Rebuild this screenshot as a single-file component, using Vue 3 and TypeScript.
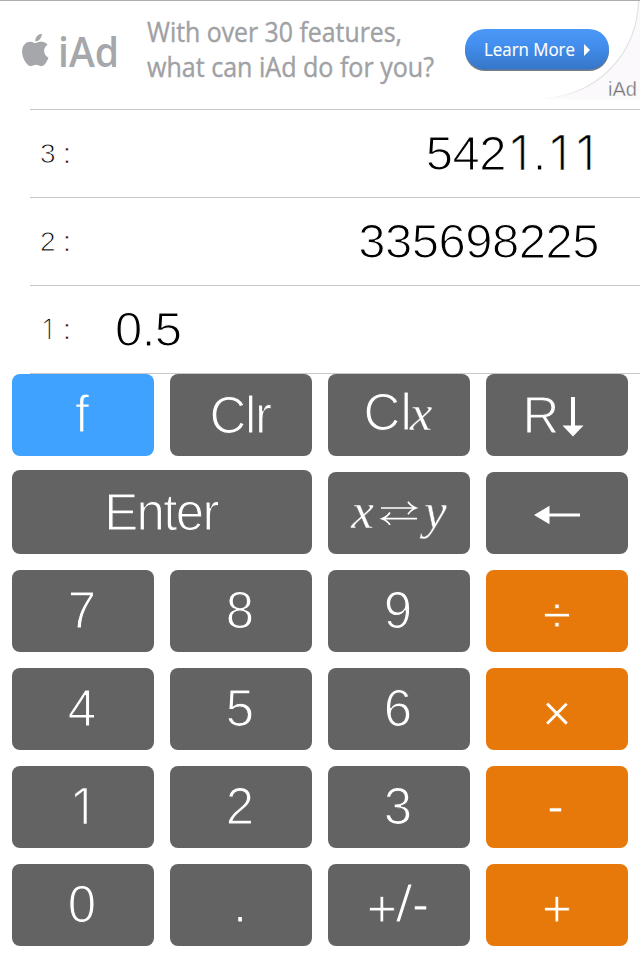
<script setup lang="ts">
interface StackRow {
  label: string
  value: string
  entry: boolean
}

interface Key {
  id: string
  label: string
  tone: 'gray' | 'blue' | 'orange'
}

interface Piece {
  text: string
  kind: string
}

const rows: StackRow[] = [
  { label: '3', value: '5421.11', entry: false },
  { label: '2', value: '335698225', entry: false },
  { label: '1', value: '0.5', entry: true },
]

const keys: Key[] = [
  { id: 'func', label: 'f', tone: 'blue' },
  { id: 'clear', label: 'Clr', tone: 'gray' },
  { id: 'clearx', label: 'Cl', tone: 'gray' },
  { id: 'roll', label: 'R', tone: 'gray' },
  { id: 'enter', label: 'Enter', tone: 'gray' },
  { id: 'swap', label: '', tone: 'gray' },
  { id: 'back', label: '', tone: 'gray' },
  { id: 'd7', label: '7', tone: 'gray' },
  { id: 'd8', label: '8', tone: 'gray' },
  { id: 'd9', label: '9', tone: 'gray' },
  { id: 'divide', label: '÷', tone: 'orange' },
  { id: 'd4', label: '4', tone: 'gray' },
  { id: 'd5', label: '5', tone: 'gray' },
  { id: 'd6', label: '6', tone: 'gray' },
  { id: 'times', label: '×', tone: 'orange' },
  { id: 'd1', label: '1', tone: 'gray' },
  { id: 'd2', label: '2', tone: 'gray' },
  { id: 'd3', label: '3', tone: 'gray' },
  { id: 'minus', label: '-', tone: 'orange' },
  { id: 'd0', label: '0', tone: 'gray' },
  { id: 'dot', label: '.', tone: 'gray' },
  { id: 'sign', label: '+/-', tone: 'gray' },
  { id: 'plus', label: '+', tone: 'orange' },
]

const kinds: Record<string, string> = { '1': 'one', '+': 'add', '-': 'dash' }

// The digit one and the signs are set apart so they can take their own face and height.
function pieces(text: string): Piece[] {
  return text
    .split(/([1+-])/)
    .filter((part) => part !== '')
    .map((part) => ({ text: part, kind: kinds[part] ?? 'plain' }))
}
</script>

<template>
  <main class="calculator">
    <svg class="banner" viewBox="0 0 640 109" width="640" height="109">
      <defs>
        <linearGradient id="pill" x1="0" y1="0" x2="0" y2="1">
          <stop offset="0" stop-color="#4b98f6" />
          <stop offset="0.35" stop-color="#4490f0" />
          <stop offset="1" stop-color="#3576c8" />
        </linearGradient>
        <linearGradient id="fade" gradientUnits="userSpaceOnUse" x1="540" y1="0" x2="590" y2="0">
          <stop offset="0" stop-color="#fff" />
          <stop offset="1" stop-color="#e2e2e5" />
        </linearGradient>
      </defs>
      <path class="corner" d="M540 99.500A98.500 98.500 0 0 0 638.500 1H640V99.500Z" />
      <path class="curl" d="M540 98.500A98.500 98.500 0 0 0 638.500 1" />
      <rect class="edge" width="640" height="1" />
      <path
        class="logo"
        transform="translate(19.100 33.800) scale(1.350)"
        d="M12.152 6.896c-.948 0-2.415-1.078-3.960-1.040-2.040.027-3.910 1.183-4.961 3.014-2.117 3.675-.546 9.103 1.519 12.090 1.013 1.454 2.208 3.090 3.792 3.039 1.520-.065 2.090-.987 3.935-.987 1.831 0 2.350.987 3.960.948 1.637-.026 2.676-1.480 3.676-2.948 1.156-1.688 1.636-3.325 1.662-3.415-.039-.013-3.182-1.221-3.220-4.857-.026-3.040 2.480-4.494 2.597-4.559-1.429-2.090-3.623-2.324-4.390-2.376-2-.156-3.675 1.090-4.610 1.090zM15.530 3.830c.843-1.012 1.400-2.427 1.245-3.830-1.207.052-2.662.805-3.532 1.818-.780.896-1.454 2.338-1.273 3.714 1.338.104 2.715-.688 3.559-1.701"
      />
      <text class="brand" x="58" y="66.500" textLength="61" lengthAdjust="spacingAndGlyphs">iAd</text>
      <text class="pitch" x="147" y="42" textLength="255" lengthAdjust="spacingAndGlyphs">With over 30 features,</text>
      <text class="pitch" x="147" y="77" textLength="287" lengthAdjust="spacingAndGlyphs">what can iAd do for you?</text>
      <rect class="pill-shadow" x="465" y="31" width="144" height="40" rx="20" />
      <rect class="pill" x="465" y="29" width="144" height="40.500" rx="20" />
      <text class="more" x="484" y="56" textLength="91" lengthAdjust="spacingAndGlyphs">Learn More</text>
      <path class="chevron" d="M584 44L590 50L584 56Z" />
      <text class="tag" x="608" y="96" textLength="29" lengthAdjust="spacingAndGlyphs">iAd</text>
    </svg>

    <section class="stack">
      <div v-for="row in rows" :key="row.label" class="row" :class="{ entry: row.entry }">
        <span class="index"><span v-for="(p, i) in pieces(row.label)" :key="i" :class="p.kind">{{ p.text }}</span></span>
        <span class="colon">:</span>
        <span class="value"><span v-for="(p, i) in pieces(row.value)" :key="i" :class="p.kind">{{ p.text }}</span></span>
      </div>
    </section>

    <section class="keypad">
      <button v-for="key in keys" :key="key.id" class="key" :class="[key.tone, key.id]" type="button">
        <span v-if="key.label" class="label"><span v-for="(p, i) in pieces(key.label)" :key="i" :class="p.kind">{{ p.text }}</span></span>
        <span v-if="key.id === 'clearx'" class="var">x</span>
        <svg v-if="key.id === 'roll'" class="down" viewBox="0 0 20 40" width="20" height="40">
          <path d="M8 0H12V28.500H20.500L10 39.500L-.500 28.500H8Z" />
        </svg>
        <template v-if="key.id === 'swap'">
          <span class="var">x</span>
          <svg class="arrows" viewBox="0 0 36 24" width="36" height="24">
            <path d="M0 7H35M27 .800Q29.500 5 35 7Q29.500 9 27 13.200M36 17.700H1M9 11.500Q6.500 15.700 1 17.700Q6.500 19.700 9 23.900" />
          </svg>
          <span class="var">y</span>
        </template>
        <svg v-if="key.id === 'back'" class="left" viewBox="0 0 46 20" width="46" height="20">
          <path d="M0 10L15.500 .800V8.600H46V11.400H15.500V19.200Z" />
        </svg>
      </button>
    </section>
  </main>
</template>

<style>
body {
  margin: 0;
  background: #fff;
}
</style>

<style scoped>
.calculator {
  width: 640px;
  height: 960px;
  overflow: hidden;
  background: #fff;
  font-family: "Liberation Sans", Arial, sans-serif;
}

.banner {
  display: block;
}

.edge {
  fill: #adadad;
}

.corner {
  fill: #fbf9fb;
}

.curl {
  fill: none;
  stroke: url(#fade);
  stroke-width: 1.2;
}

.logo {
  fill: #a5a7aa;
}

.brand,
.pitch,
.more {
  font-family: "Open Sans", "Noto Sans", sans-serif;
}

.brand {
  fill: #a5a7aa;
  font-size: 41.5px;
  font-weight: 600;
}

.pitch {
  fill: #9fa1a4;
  stroke: #9fa1a4;
  stroke-width: 0.4;
  font-size: 27.5px;
}

.pill {
  fill: url(#pill);
}

.pill-shadow {
  fill: #777b82;
}

.more {
  fill: #fff;
  stroke: #fff;
  stroke-width: 0.15;
  font-size: 18.5px;
}

.chevron {
  fill: #fff;
}

.tag {
  fill: #777;
  stroke: #fbf9fb;
  stroke-width: 0.3;
  font-size: 20px;
}

.stack {
  margin-left: 30px;
  border-top: 1px solid #c8c7cc;
}

.row {
  display: flex;
  height: 87px;
  padding-right: 41px;
  border-bottom: 1px solid #c8c7cc;
  color: #000;
}

.index,
.colon {
  padding-top: 1px;
  font-size: 28px;
  line-height: 86px;
  -webkit-text-stroke: 0.9px #fff;
}

.index {
  width: 24px;
  padding-left: 10px;
}

.colon {
  width: 10px;
  margin-left: -1px;
  -webkit-text-stroke: 0.6px #fff;
}

.value {
  flex: 1;
  text-align: right;
  font-size: 49px;
  line-height: 87px;
  letter-spacing: -0.5px;
  -webkit-text-stroke: 1.2px #fff;
}

.entry .value {
  padding-left: 42px;
  text-align: left;
}

.one {
  display: inline-block;
  width: 0.56em;
  font-family: Inter, "Liberation Sans", sans-serif;
  font-weight: 300;
  font-size: 0.97em;
  line-height: 1;
  letter-spacing: 0;
  text-align: center;
  -webkit-text-stroke-width: 0.4px;
}

.index .one {
  font-weight: 200;
  -webkit-text-stroke-width: 0.2px;
}

.keypad {
  display: grid;
  grid-template-columns: repeat(4, 142px);
  grid-auto-rows: 82px;
  gap: 16px;
  padding: 0 12px;
}

.key {
  display: flex;
  justify-content: center;
  padding: 0 2px 0 0;
  border: 0;
  border-radius: 8px;
  color: #fff;
  font-family: inherit;
  font-size: 51px;
  line-height: 82px;
  overflow: hidden;
}

.gray {
  background: #636363;
  -webkit-text-stroke: 1.2px #636363;
}

.blue {
  background: #40a2ff;
  -webkit-text-stroke: 1.2px #40a2ff;
}

.orange {
  background: #e7790b;
  padding-top: 5px;
  padding-right: 0;
  -webkit-text-stroke: 0.8px #e7790b;
}

.minus {
  padding-top: 0;
  padding-right: 3px;
}

.enter {
  grid-column: span 2;
  margin-top: -2px;
  line-height: 86px;
  letter-spacing: -1.7px;
}

.clear {
  letter-spacing: -1.3px;
  line-height: 83px;
}

.sign .label {
  display: flex;
}

.sign .add {
  padding-top: 5px;
  margin-right: -1px;
  -webkit-text-stroke-width: 0.8px;
}

.sign .plain {
  margin: 0 1px;
  transform: scaleX(1.2);
}

.dash {
  -webkit-text-stroke-width: 0.8px;
}

.key svg {
  flex: none;
  overflow: visible;
}

.key svg path {
  fill: #fff;
}

.clearx {
  line-height: 78px;
}

.var {
  font-family: "Liberation Serif", "Times New Roman", serif;
  font-size: 51px;
  font-style: italic;
  -webkit-text-stroke-width: 0.4px;
}

.clearx .var {
  margin-left: -2px;
}

.roll {
  padding-right: 8px;
  line-height: 84px;
}

.down {
  margin: 23px 0 0 4px;
}

.swap {
  padding-right: 0;
  line-height: 78px;
}

.arrows {
  margin: 29px 7px 0;
}

.key .arrows path {
  fill: none;
  stroke: #fff;
  stroke-width: 1.7;
}

.back {
  padding-right: 0;
}

.left {
  margin-top: 33px;
}
</style>
